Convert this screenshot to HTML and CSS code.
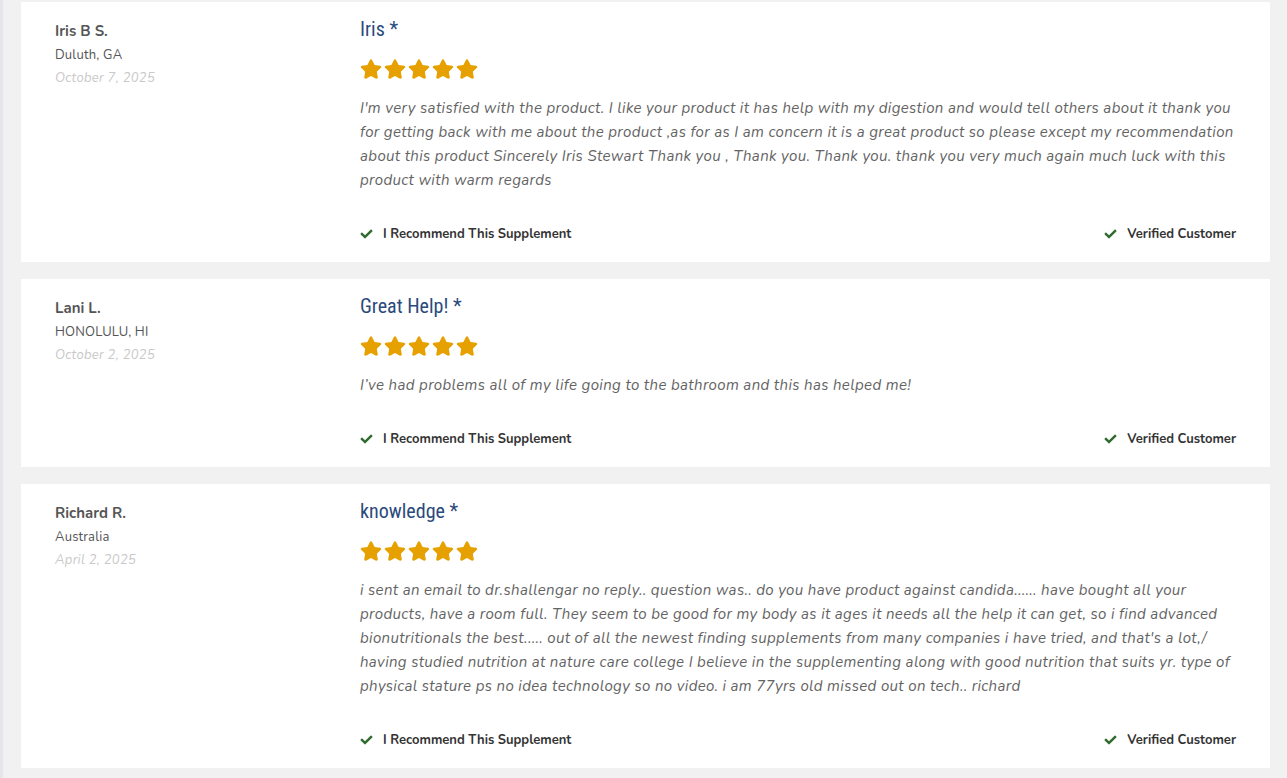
FILE: index.html
```html
<!DOCTYPE html>
<html lang="en">
<head>
<meta charset="utf-8">
<title>Reviews</title>
<link rel="stylesheet" href="styles.css">
</head>
<body>
<svg width="0" height="0" style="position:absolute">
  <defs>
    <symbol id="star" viewBox="0 0 576 512"><path d="M259.3 17.8L194 150.2 47.9 171.5c-26.2 3.8-36.7 36.1-17.7 54.6l105.7 103-25 145.5c-4.5 26.3 23.2 46 46.4 33.7L288 439.6l130.7 68.7c23.2 12.2 50.9-7.4 46.4-33.7l-25-145.5 105.7-103c19-18.5 8.5-50.8-17.7-54.6L382 150.2 316.7 17.8c-11.7-23.6-45.6-23.9-57.4 0z"/></symbol>
    <symbol id="check" viewBox="0 0 512 512"><path d="M173.9 439.4l-166.4-166.4c-10-10-10-26.2 0-36.2l36.2-36.2c10-10 26.2-10 36.2 0L192 312.7 432.1 72.6c10-10 26.2-10 36.2 0l36.2 36.2c10 10 10 26.2 0 36.2L210.1 439.4c-10 10-26.2 10-36.2 0z"/></symbol>
  </defs>
</svg>
<main class="reviews">
  <article class="review">
    <div class="author">
      <div class="name">Iris B S.</div>
      <div class="location">Duluth, GA</div>
      <div class="date">October 7, 2025</div>
    </div>
    <div class="content">
      <h3 class="title">Iris *</h3>
      <div class="stars"><svg><use href="#star"/></svg><svg><use href="#star"/></svg><svg><use href="#star"/></svg><svg><use href="#star"/></svg><svg><use href="#star"/></svg></div>
      <p class="text">I'm very satisfied with the product. I like your product it has help with my digestion and would tell others about it thank you for getting back with me about the product ,as for as I am concern it is a great product so please except my recommendation about this product Sincerely Iris Stewart Thank you , Thank you. Thank you. thank you very much again much luck with this product with warm regards</p>
      <div class="meta">
        <span class="badge"><svg class="check"><use href="#check"/></svg>I Recommend This Supplement</span>
        <span class="badge"><svg class="check"><use href="#check"/></svg>Verified Customer</span>
      </div>
    </div>
  </article>
  <article class="review">
    <div class="author">
      <div class="name">Lani L.</div>
      <div class="location">HONOLULU, HI</div>
      <div class="date">October 2, 2025</div>
    </div>
    <div class="content">
      <h3 class="title">Great Help! *</h3>
      <div class="stars"><svg><use href="#star"/></svg><svg><use href="#star"/></svg><svg><use href="#star"/></svg><svg><use href="#star"/></svg><svg><use href="#star"/></svg></div>
      <p class="text">I’ve had problems all of my life going to the bathroom and this has helped me!</p>
      <div class="meta">
        <span class="badge"><svg class="check"><use href="#check"/></svg>I Recommend This Supplement</span>
        <span class="badge"><svg class="check"><use href="#check"/></svg>Verified Customer</span>
      </div>
    </div>
  </article>
  <article class="review">
    <div class="author">
      <div class="name">Richard R.</div>
      <div class="location">Australia</div>
      <div class="date">April 2, 2025</div>
    </div>
    <div class="content">
      <h3 class="title">knowledge *</h3>
      <div class="stars"><svg><use href="#star"/></svg><svg><use href="#star"/></svg><svg><use href="#star"/></svg><svg><use href="#star"/></svg><svg><use href="#star"/></svg></div>
      <p class="text">i sent an email to dr.shallengar no reply.. question was.. do you have product against candida...... have bought all your products, have a room full. They seem to be good for my body as it ages it needs all the help it can get, so i find advanced bionutritionals the best..... out of all the newest finding supplements from many companies i have tried, and that's a lot,/ having studied nutrition at nature care college I believe in the supplementing along with good nutrition that suits yr. type of physical stature ps no idea technology so no video. i am 77yrs old missed out on tech.. richard</p>
      <div class="meta">
        <span class="badge"><svg class="check"><use href="#check"/></svg>I Recommend This Supplement</span>
        <span class="badge"><svg class="check"><use href="#check"/></svg>Verified Customer</span>
      </div>
    </div>
  </article>
</main>
</body>
</html>
```
FILE: styles.css
```css
html, body {
  margin: 0;
  padding: 0;
}
body {
  background: #f1f1f1;
  border-left: 3px solid #e4e6ea;
  font-family: "Nunito", "Lato", "Open Sans", sans-serif;
  color: #555;
  min-height: 778px;
  box-sizing: border-box;
}
.reviews {
  display: flex;
  flex-direction: column;
  gap: 17px;
  padding: 2px 17px 0 18px;
}
.review {
  background: #fff;
  display: grid;
  grid-template-columns: 305px 1fr;
  padding: 15px 34px 18px 34px;
}
.author {
  padding-top: 2px;
}
.name {
  font-size: 15px;
  font-weight: 700;
  line-height: 24px;
  color: #555;
}
.location {
  font-size: 13px;
  line-height: 20px;
  margin-top: 2px;
  letter-spacing: 0.2px;
  color: #555;
}
.date {
  font-size: 13px;
  line-height: 20px;
  margin-top: 3px;
  font-style: italic;
  letter-spacing: 0.3px;
  color: #c9c9c9;
}
.title {
  margin: 0;
  font-family: "Roboto Condensed", "Liberation Sans Narrow", "DejaVu Sans Condensed", sans-serif;
  font-weight: 400;
  font-size: 20px;
  line-height: 24px;
  color: #2b4a7c;
}
.stars {
  display: flex;
  gap: 2px;
  margin-top: 16px;
  height: 24px;
  align-items: center;
}
.stars svg {
  width: 22px;
  height: 20px;
  fill: #e6a100;
}
.text {
  margin: 15px 0 0;
  font-size: 15px;
  line-height: 24px;
  font-style: italic;
  letter-spacing: 0.35px;
  color: #636363;
}
.meta {
  display: flex;
  justify-content: space-between;
  margin-top: 32px;
  line-height: 20px;
}
.badge {
  display: flex;
  align-items: center;
  font-size: 13px;
  font-weight: 700;
  color: #333;
}
.check {
  width: 13px;
  height: 12px;
  fill: #2f6b2f;
  margin-right: 10px;
}
```
